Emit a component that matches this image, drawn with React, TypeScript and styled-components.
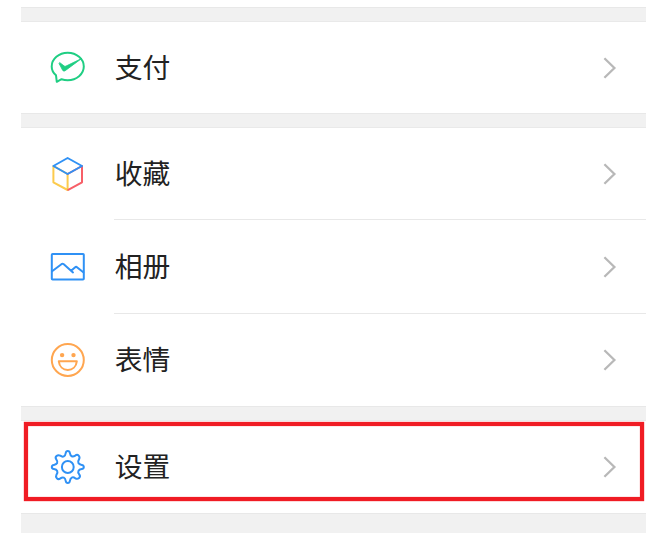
import React from 'react';
import styled, { createGlobalStyle } from 'styled-components';

const GlobalStyle = createGlobalStyle`
  * { box-sizing: border-box; }
  body { margin: 0; background: #fff; overflow: hidden; }
`;

const Page = styled.main`
  display: flex;
  flex-direction: column;
  width: 648px;
  height: 533px;
  padding: 7px 2px 0 21px;
  background: #fff;
  font-family: 'Noto Sans CJK SC', sans-serif;
`;

const Gap = styled.div<{ $height: number }>`
  flex: none;
  height: ${(p) => p.$height}px;
  background: #f1f1f1;
  border-top: 1px solid #e8e8e8;
  border-bottom: 1px solid #e9e9e9;
`;

const Group = styled.section`
  flex: none;
  position: relative;
`;

const Row = styled.div<{ $height: number }>`
  display: flex;
  align-items: center;
  height: ${(p) => p.$height}px;
  padding-left: 29px;
`;

const IconBox = styled.span`
  display: flex;
  flex: none;
  width: 36px;
  height: 36px;
  margin-right: 28px;
`;

const Content = styled.div<{ $divided?: boolean }>`
  display: flex;
  flex: 1;
  align-items: center;
  justify-content: space-between;
  height: 100%;
  padding-right: 28px;
  border-bottom: ${(p) => (p.$divided ? '1px solid #e8e8e8' : '0')};
`;

const Label = styled.span`
  font-size: 27.8px;
  line-height: 40px;
  color: #222;
  padding: 0 0 4px 0.7px;
`;

const Highlight = styled.div`
  position: absolute;
  inset: 1px 2.5px 12px 2.5px;
  border: 4px solid #f01c24;
  box-shadow: 0 0 1px #f01c24, inset 0 0 1px #f01c24;
  pointer-events: none;
`;

const Svg = ({ children }: { children: React.ReactNode }) => (
  <svg width="36" height="36" viewBox="0.2 0 36 36" fill="none" strokeWidth="2" strokeLinejoin="round" strokeLinecap="round">
    {children}
  </svg>
);

const PayIcon = () => (
  <Svg>
    <path stroke="#1fce83" d="M6.2 25.3C3.4 22.9 1.9 19.9 1.9 16.5C1.9 9 9 2.8 17.9 2.8S34 9 34 16.5S26.8 30.2 17.9 30.2C15.7 30.2 13.6 29.8 11.7 29.2L7 31.8Z" />
    <path fill="#1fce83" stroke="#1fce83" strokeWidth=".8" d="M10.2 12.8L14.4 16C15 16.4 15.6 16.4 16.2 16.1L32 8.4L15.4 20.7C14.4 21.4 13.4 21.2 12.8 20.2L9.3 13.6Z" />
  </Svg>
);

const CubeIcon = () => (
  <Svg>
    <path stroke="#fccb4d" d="M3.6 10V26.3L17.8 34V18Z" />
    <path stroke="#f75f68" d="M17.8 18L32.2 10V26.3L18.4 33.8" />
    <path stroke="#2f91f5" d="M3.6 10L17.8 2L32.2 10L17.8 18Z" />
  </Svg>
);

const AlbumIcon = () => (
  <Svg>
    <rect x="2" y="5" width="32" height="25.5" rx=".8" stroke="#2f91f5" />
    <path stroke="#2f91f5" d="M2.3 22.2L11.6 15.2Q12.8 14.4 14 15.3L23.2 23.4M21.3 21.8L25.1 18.4Q26.3 17.4 27.5 18.4L33.5 23.2" />
  </Svg>
);

const SmileIcon = () => (
  <Svg>
    <circle cx="18" cy="18" r="16" stroke="#ffa650" />
    <circle cx="12.3" cy="13.1" r="2.2" fill="#ffa650" />
    <circle cx="23.7" cy="13.1" r="2.2" fill="#ffa650" />
    <path stroke="#ffa650" d="M9 19.3H27C26.4 24.6 22.8 28 18 28S9.6 24.6 9 19.3Z" />
  </Svg>
);

const GearIcon = () => (
  <Svg>
    <circle cx="18" cy="18" r="5.9" stroke="#2f91f5" />
    {/* Eight rounded teeth joined by concave valleys */}
    <path
      stroke="#2f91f5"
      d="M15.9 4.1Q16.2 2 18 2T20.1 4.1C20.6 7.3 22.8 8.5 25.4 6.6Q27.4 5 28.9 6.7T29.2 10.4C27.4 13.2 28.5 15.4 31.9 15.9Q34 16.2 34 18T31.9 20.1C28.5 20.6 27.4 22.8 29.4 25.4Q31 27.4 29.3 28.9T25.6 29.3C22.8 27.4 20.6 28.5 20.1 31.9Q19.8 34 18 34T15.9 31.9C15.4 28.5 13.2 27.4 10.6 29.4Q8.6 31 7.1 29.3T6.7 25.6C8.6 22.8 7.5 20.6 4.1 20.1Q2 19.8 2 18T4.1 15.9C7.5 15.4 8.6 13.2 6.6 10.6Q5 8.6 6.7 7.1T10.4 6.7C13.2 8.6 15.4 7.5 15.9 4.1Z"
    />
  </Svg>
);

const Chevron = () => (
  <svg width="16" height="24" viewBox="0 0 16 24" fill="none">
    <path d="M2.4 2.2L12.4 12L2.4 21.8" stroke="#b8b8b8" strokeWidth="2.3" />
  </svg>
);

interface ItemProps {
  icon: React.ReactNode;
  label: string;
  height: number;
  divided?: boolean;
}

const Item = ({ icon, label, height, divided }: ItemProps) => (
  <Row $height={height}>
    <IconBox>{icon}</IconBox>
    <Content $divided={divided}>
      <Label>{label}</Label>
      <Chevron />
    </Content>
  </Row>
);

export default function App() {
  return (
    <Page>
      <GlobalStyle />
      <Gap $height={15} />
      <Group>
        <Item icon={<PayIcon />} label="支付" height={91} />
      </Group>
      <Gap $height={15} />
      <Group>
        <Item icon={<CubeIcon />} label="收藏" height={92} divided />
        <Item icon={<AlbumIcon />} label="相册" height={94} divided />
        <Item icon={<SmileIcon />} label="表情" height={92} />
      </Group>
      <Gap $height={15} />
      <Group>
        <Item icon={<GearIcon />} label="设置" height={92} />
        <Highlight />
      </Group>
      <Gap $height={21} />
    </Page>
  );
}
